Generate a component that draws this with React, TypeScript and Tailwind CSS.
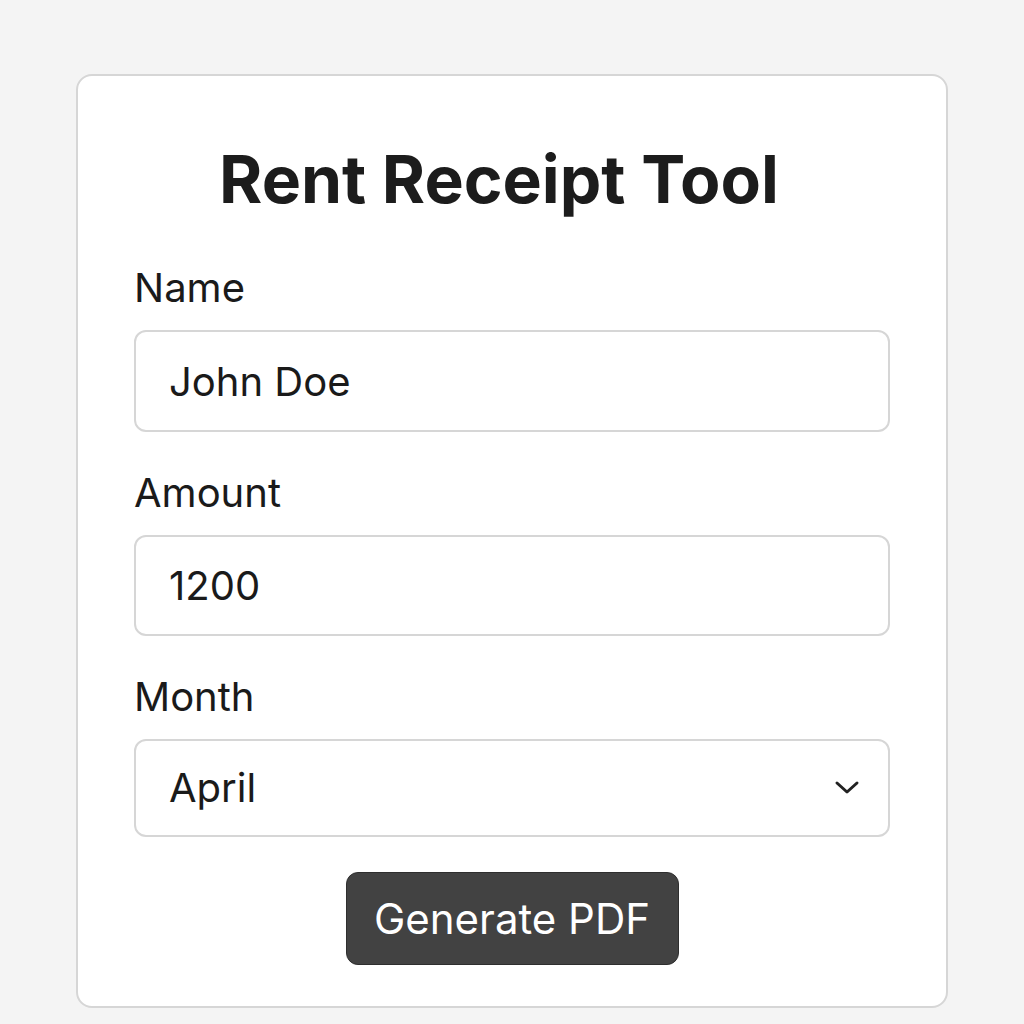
import { useState } from "react";

function Field({ label, first, children }: { label: string; first?: boolean; children: React.ReactNode }) {
  return (
    <div className={first ? "mt-[45px]" : "mt-[37px]"}>
      <label className="block text-[40px] leading-[48px] text-[#1a1a1a]">{label}</label>
      <div className="mt-[18px]">{children}</div>
    </div>
  );
}

export default function App() {
  const [name, setName] = useState("John Doe");
  const [amount, setAmount] = useState("1200");
  const [month, setMonth] = useState("April");

  const box =
    "block w-full rounded-[12px] border-2 border-[#d6d6d6] bg-white pl-[33px] pr-[30px] text-[40px] text-[#1a1a1a] outline-none";

  return (
    <div className="min-h-screen bg-[#f4f4f4] pt-[74px] font-['Inter',sans-serif]">
      <div className="mx-auto w-[872px] rounded-[16px] border-2 border-[#d6d6d6] bg-white px-[56px] pt-[64px] pb-[41px]">
        <h1 className="pr-[26px] text-center text-[66px] leading-[79px] font-bold text-[#1c1c1c]">
          Rent Receipt Tool
        </h1>

        <Field label="Name" first>
          <input className={box + " h-[102px]"} value={name} onChange={(e) => setName(e.target.value)} />
        </Field>

        <Field label="Amount">
          <input className={box + " h-[101px]"} value={amount} onChange={(e) => setAmount(e.target.value)} />
        </Field>

        <Field label="Month">
          <div className="relative">
            <select
              className={box + " h-[98px] appearance-none"}
              value={month}
              onChange={(e) => setMonth(e.target.value)}
            >
              {["January", "February", "March", "April", "May", "June", "July", "August", "September", "October", "November", "December"].map((m) => (
                <option key={m}>{m}</option>
              ))}
            </select>
            <svg
              className="pointer-events-none absolute right-[30px] top-1/2 -translate-y-1/2"
              width="26"
              height="16"
              viewBox="0 0 26 16"
              fill="none"
            >
              <polyline points="3,3 13,12 23,3" stroke="#222" strokeWidth="3" strokeLinecap="round" strokeLinejoin="round" />
            </svg>
          </div>
        </Field>

        <div className="mt-[35px] flex justify-center">
          <button className="h-[93px] w-[333px] rounded-[12px] border border-[#2e2e2e] bg-[#424242] text-[42px] text-white">
            Generate PDF
          </button>
        </div>
      </div>
    </div>
  );
}
